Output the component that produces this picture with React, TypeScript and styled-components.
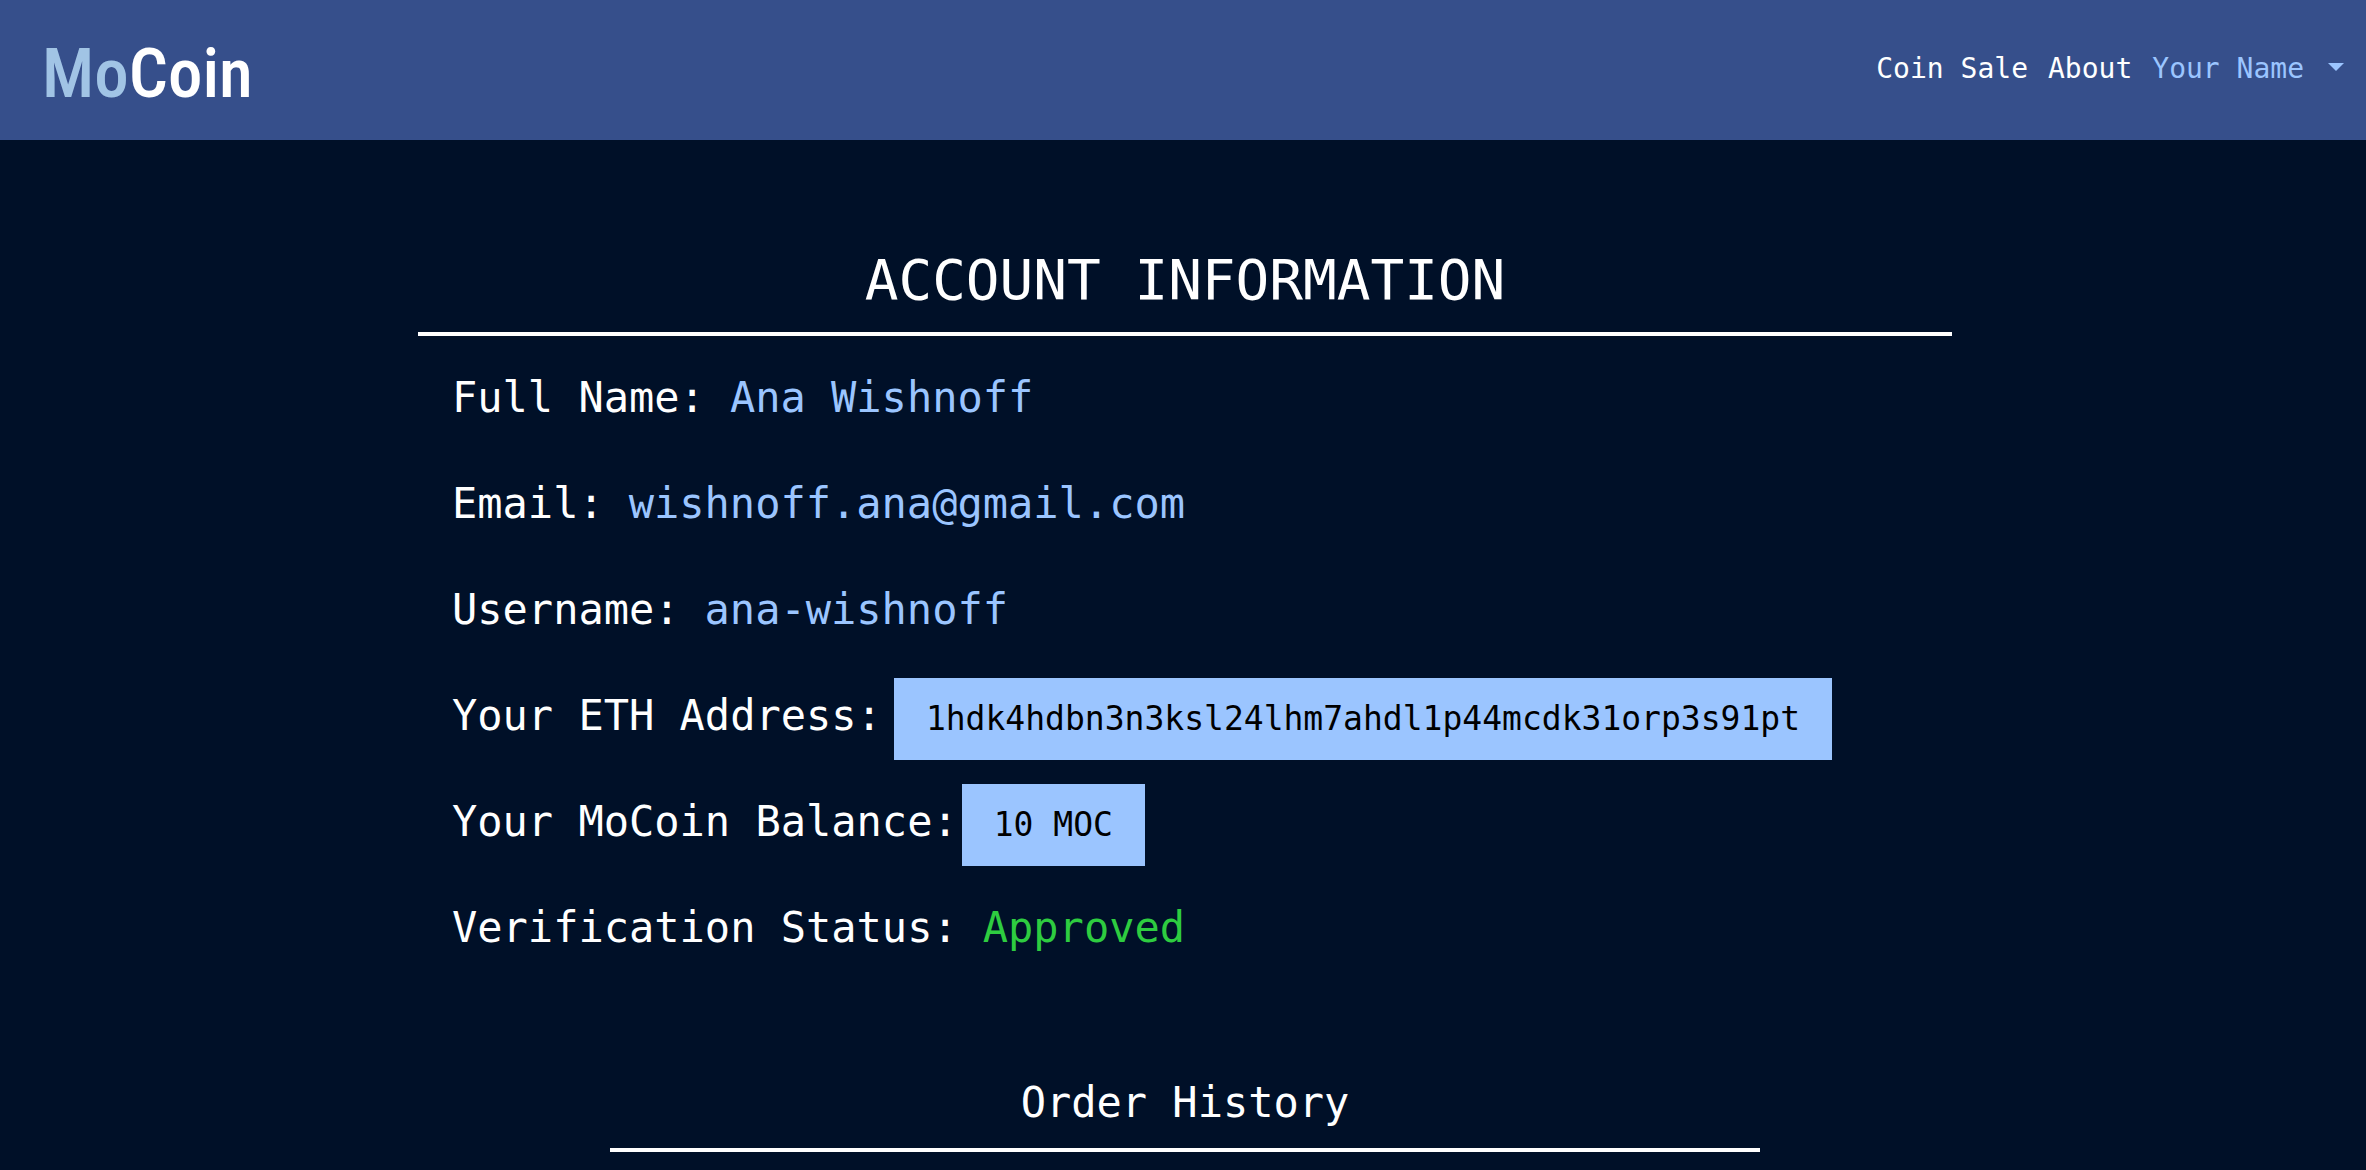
import React from "react";
import styled, { createGlobalStyle } from "styled-components";

const colors = {
  page: "#001028",
  bar: "#364f8b",
  sky: "#9bc5ff",
  logo: "#a1c4e5",
  green: "#2ecc40",
};

const GlobalStyle = createGlobalStyle`
  * { box-sizing: border-box; }
  body {
    margin: 0;
    min-height: 100vh;
    background: ${colors.page};
    color: #fff;
    font-family: "DejaVu Sans Mono", "Liberation Mono", monospace;
  }
`;

const NavBar = styled.header`
  display: flex;
  align-items: center;
  justify-content: space-between;
  height: 140px;
  padding: 0 22px 0 42px;
  background: ${colors.bar};
`;

const Logo = styled.a`
  color: #fff;
  font-family: "Roboto Condensed", "DejaVu Sans Condensed", sans-serif;
  font-size: 69px;
  font-weight: 500;
  line-height: 76px;
  padding-top: 8px;
  text-decoration: none;
`;

const LogoAccent = styled.span`
  color: ${colors.logo};
`;

const NavLinks = styled.nav`
  display: flex;
  align-items: center;
  gap: 20px;
  padding-bottom: 2px;
  font-size: 28px;
  line-height: 40px;
`;

const NavLink = styled.a`
  color: #fff;
  text-decoration: none;
`;

const MenuButton = styled.button`
  display: flex;
  align-items: center;
  gap: 24px;
  padding: 0;
  border: 0;
  background: none;
  color: ${colors.sky};
  font: inherit;
  cursor: pointer;
`;

const Caret = styled.span`
  margin-bottom: 4px;
  border-top: 8px solid currentColor;
  border-left: 8px solid transparent;
  border-right: 8px solid transparent;
`;

const Main = styled.main`
  padding: 100px 0 0 4px;
`;

const Account = styled.section`
  width: 100%;
  max-width: 1534px;
  margin: 0 auto;
`;

const Title = styled.h1`
  margin: 0;
  padding-bottom: 12px;
  border-bottom: 4px solid #fff;
  font-size: 56px;
  font-weight: 400;
  line-height: 80px;
  text-align: center;
  text-transform: uppercase;
`;

const Details = styled.dl`
  margin: 0;
  padding: 9px 34px 0;
  font-size: 42px;
  line-height: 106px;
`;

const Row = styled.div<{ $gap: number }>`
  display: flex;
  align-items: baseline;
  gap: ${(p) => p.$gap}px;
`;

const Label = styled.dt`
  white-space: nowrap;
`;

const Value = styled.dd<{ $color?: string }>`
  margin: 0;
  color: ${(p) => p.$color ?? colors.sky};
`;

const BoxedValue = styled.dd`
  margin: 0;
  padding: 0 32px;
  background: ${colors.sky};
  color: #000;
  font-size: 33px;
  line-height: 82px;
`;

const Orders = styled.section`
  width: 75%;
  max-width: 1150px;
  margin: 92px auto 0;
`;

const Subtitle = styled.h2`
  margin: 0;
  padding-bottom: 15px;
  border-bottom: 4px solid #fff;
  font-size: 42px;
  font-weight: 400;
  line-height: 60px;
  text-align: center;
`;

export default function App() {
  return (
    <>
      <GlobalStyle />
      <NavBar>
        <Logo href="#">
          <LogoAccent>Mo</LogoAccent>Coin
        </Logo>
        <NavLinks>
          <NavLink href="#sale">Coin Sale</NavLink>
          <NavLink href="#about">About</NavLink>
          <MenuButton type="button" aria-haspopup="menu">
            Your Name
            <Caret aria-hidden="true" />
          </MenuButton>
        </NavLinks>
      </NavBar>
      <Main>
        <Account>
          <Title>Account Information</Title>
          <Details>
            <Row $gap={25}>
              <Label>Full Name:</Label>
              <Value>Ana Wishnoff</Value>
            </Row>
            <Row $gap={25}>
              <Label>Email:</Label>
              <Value>wishnoff.ana@gmail.com</Value>
            </Row>
            <Row $gap={25}>
              <Label>Username:</Label>
              <Value>ana-wishnoff</Value>
            </Row>
            <Row $gap={12}>
              <Label>Your ETH Address:</Label>
              <BoxedValue>1hdk4hdbn3n3ksl24lhm7ahdl1p44mcdk31orp3s91pt</BoxedValue>
            </Row>
            <Row $gap={4}>
              <Label>Your MoCoin Balance:</Label>
              <BoxedValue>10 MOC</BoxedValue>
            </Row>
            <Row $gap={25}>
              <Label>Verification Status:</Label>
              <Value $color={colors.green}>Approved</Value>
            </Row>
          </Details>
        </Account>
        <Orders>
          <Subtitle>Order History</Subtitle>
        </Orders>
      </Main>
    </>
  );
}
